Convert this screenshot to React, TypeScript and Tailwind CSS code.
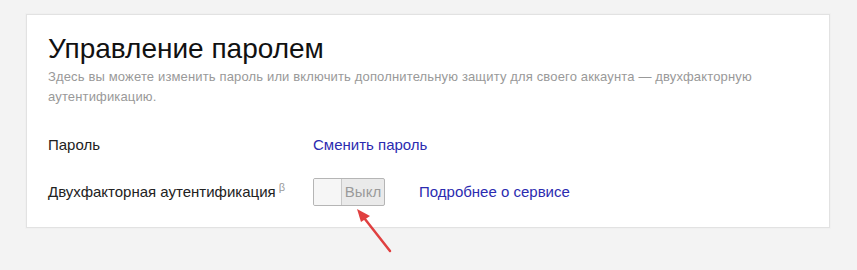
export default function App() {
  return (
    <div className="w-[857px] h-[270px] bg-[#f3f3f3] pt-[14px] pl-[26px] font-['Liberation_Sans',Arial,sans-serif]">
      <div className="w-[804px] h-[214px] bg-white border border-[#e2e2e2] shadow-[0_0_0_1px_#f0f0f0] pl-[21px] pt-[17px]">
        <h1 className="text-[28px] leading-[34px] text-[#111] font-normal">Управление паролем</h1>
        <p className="mt-[1px] w-[740px] text-[13px] leading-[20px] tracking-[0.15px] text-[#999]">
          Здесь вы можете изменить пароль или включить дополнительную защиту для своего аккаунта — двухфакторную аутентификацию.
        </p>
        <div className="mt-[28px] flex items-center h-[20px] text-[15px]">
          <span className="w-[265px] text-[#222]">Пароль</span>
          <span className="text-[#2b2bb0]">Сменить пароль</span>
        </div>
        <div className="mt-[22px] flex items-center h-[30px] text-[15px]">
          <span className="w-[265px] text-[#222]">
            Двухфакторная аутентификация<sup className="text-[11px] text-[#999] ml-[3px] relative -top-[6px]">β</sup>
          </span>
          <div className="relative">
            <div className="flex w-[72px] h-[28px] border border-[#b5b5b5] rounded-[2px] bg-[#eaeaea] overflow-hidden">
              <div className="w-[28px] h-full bg-[#f6f6f6] border-r border-[#c8c8c8]"></div>
              <div className="flex-1 flex items-center justify-center text-[15px] text-[#9a9a9a]">Выкл</div>
            </div>
            <svg className="absolute left-[40px] top-[28px]" width="40" height="50" viewBox="0 0 40 50">
              <line x1="37" y1="45" x2="8" y2="8" stroke="#e04040" strokeWidth="2.5" strokeLinecap="round" />
              <polygon points="4,3 17,10 8,16" fill="#e04040" />
            </svg>
          </div>
          <span className="ml-[34px] text-[#2b2bb0]">Подробнее о сервисе</span>
        </div>
      </div>
    </div>
  );
}
